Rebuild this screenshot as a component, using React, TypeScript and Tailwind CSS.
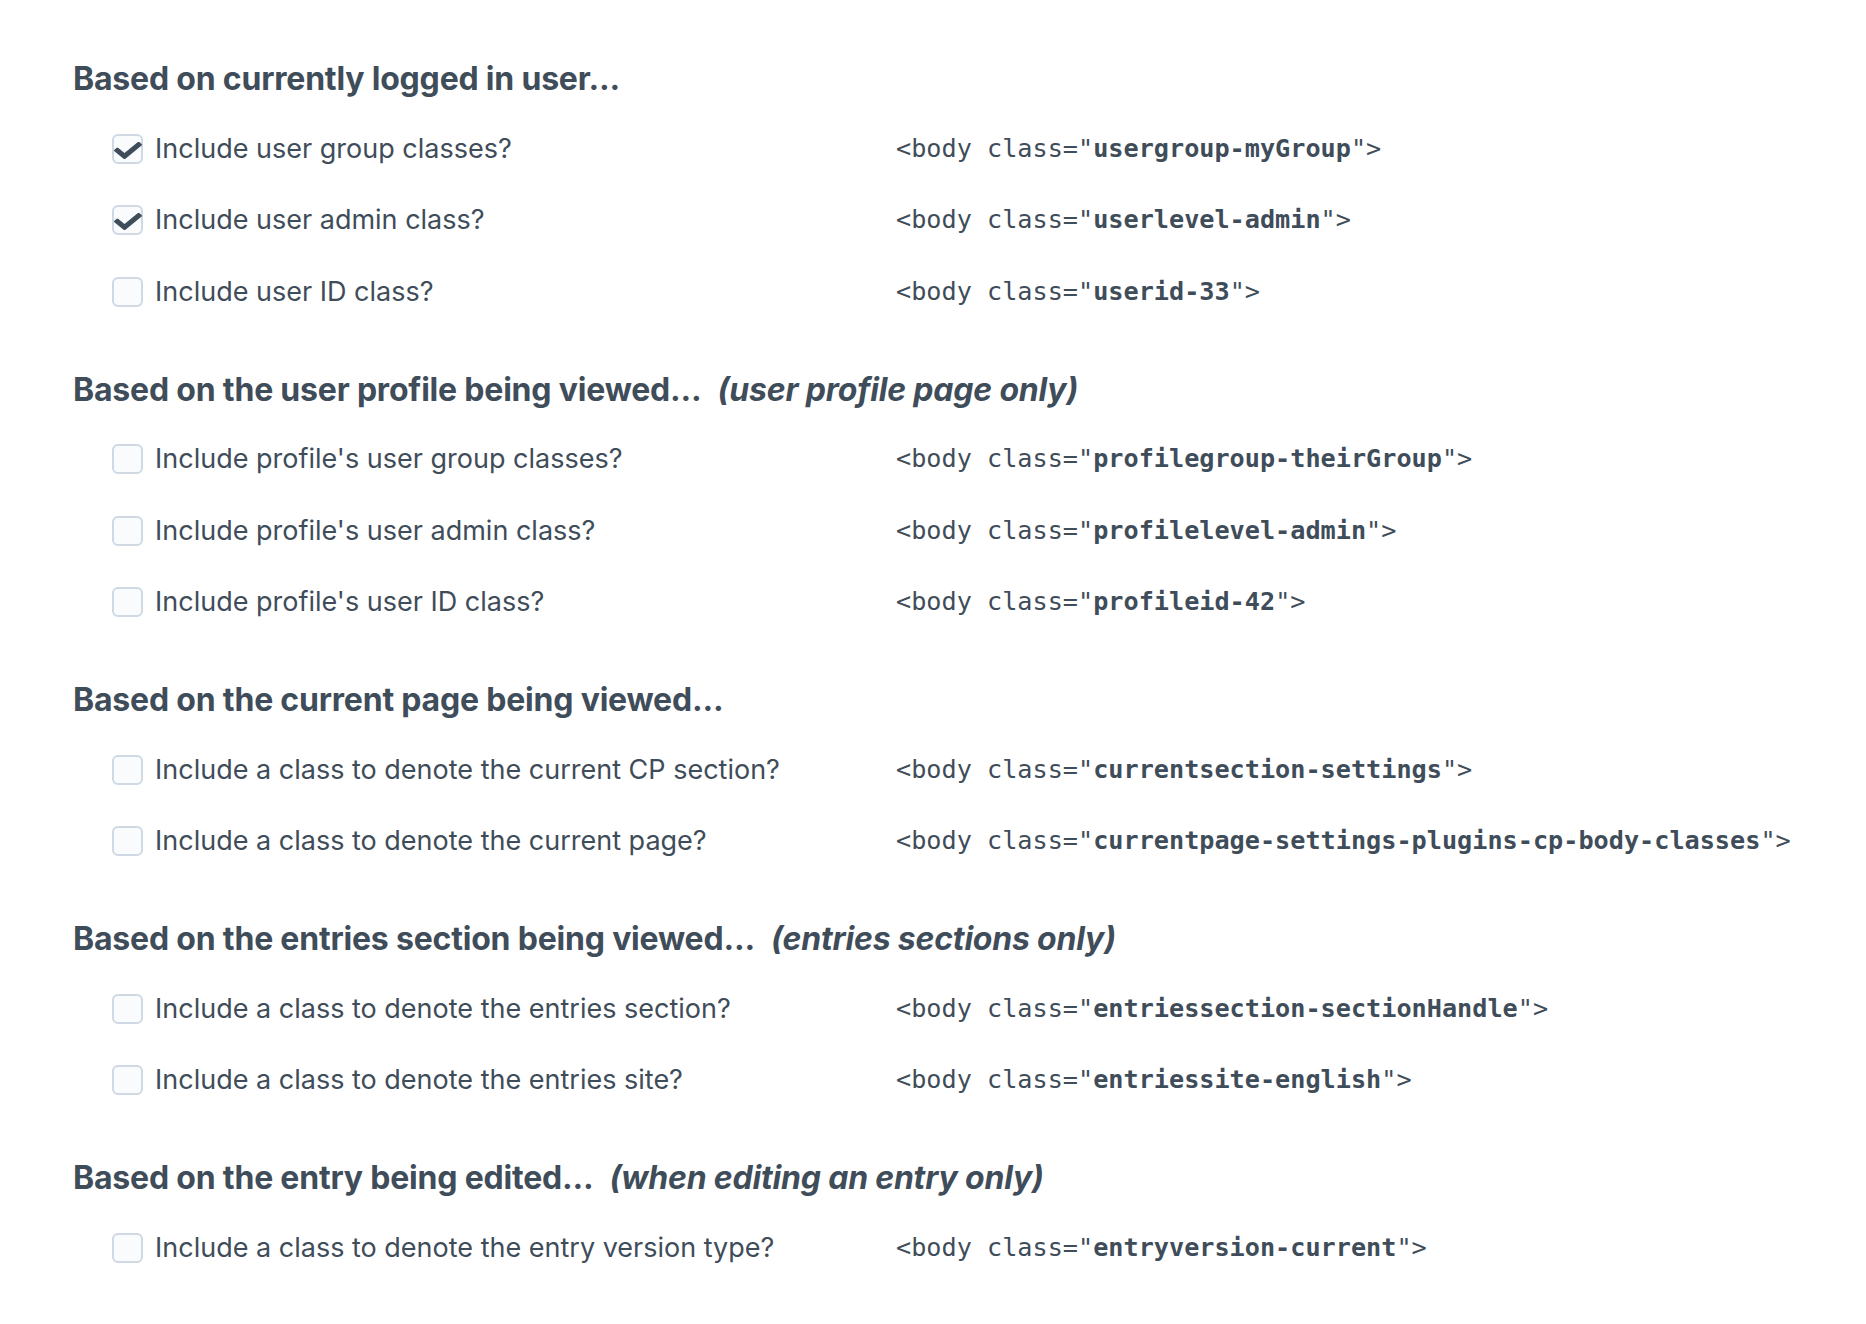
import React from "react";

type Row = { label: string; value: string; checked?: boolean };
type Section = { title: string; note?: string; rows: Row[] };

const sections: Section[] = [
    {
        title: "Based on currently logged in user...",
        rows: [
            { label: "Include user group classes?", value: "usergroup-myGroup", checked: true },
            { label: "Include user admin class?", value: "userlevel-admin", checked: true },
            { label: "Include user ID class?", value: "userid-33" },
        ],
    },
    {
        title: "Based on the user profile being viewed...",
        note: "(user profile page only)",
        rows: [
            { label: "Include profile's user group classes?", value: "profilegroup-theirGroup" },
            { label: "Include profile's user admin class?", value: "profilelevel-admin" },
            { label: "Include profile's user ID class?", value: "profileid-42" },
        ],
    },
    {
        title: "Based on the current page being viewed...",
        rows: [
            { label: "Include a class to denote the current CP section?", value: "currentsection-settings" },
            { label: "Include a class to denote the current page?", value: "currentpage-settings-plugins-cp-body-classes" },
        ],
    },
    {
        title: "Based on the entries section being viewed...",
        note: "(entries sections only)",
        rows: [
            { label: "Include a class to denote the entries section?", value: "entriessection-sectionHandle" },
            { label: "Include a class to denote the entries site?", value: "entriessite-english" },
        ],
    },
    {
        title: "Based on the entry being edited...",
        note: "(when editing an entry only)",
        rows: [
            { label: "Include a class to denote the entry version type?", value: "entryversion-current" },
        ],
    },
];

function Checkbox({ checked }: { checked?: boolean }) {
    return (
        <div className="relative w-[31px] h-[30px] shrink-0 rounded-[6px] border-2 border-[#cfd9e4] bg-[#f9fbfd]">
            {checked && (
                <svg viewBox="0 0 512 512" className="absolute left-[0px] top-[3px] w-[28px] h-[23px]" preserveAspectRatio="none">
                    <path fill="#3f4d5a" d="M173.898 439.404l-166.4-166.4c-9.997-9.997-9.997-26.206 0-36.204l36.203-36.204c9.997-9.998 26.207-9.998 36.204 0L192 312.69 432.095 72.596c9.997-9.997 26.207-9.997 36.204 0l36.203 36.204c9.997 9.997 9.997 26.206 0 36.204l-294.4 294.401c-9.998 9.997-26.207 9.997-36.204-.001z" />
                </svg>
            )}
        </div>
    );
}

export default function App() {
    return (
        <div className="min-h-screen bg-white text-[#3f4d5a] font-['Inter','Noto_Sans',sans-serif] pl-[73px] pt-[59px]">
            {sections.map((s) => (
                <section key={s.title} className="mb-[42px]">
                    <h2 className="h-[40px] leading-[40px] text-[32px] font-bold tracking-[-0.2px] mb-[14px] whitespace-nowrap">
                        {s.title}
                        {s.note && <em className="ml-[16px] font-bold">{s.note}</em>}
                    </h2>
                    {s.rows.map((r) => (
                        <div key={r.value} className="flex items-center h-[71.5px]">
                            <div className="flex items-center gap-[12px] w-[823px] pl-[39px]">
                                <Checkbox checked={r.checked} />
                                <span className="text-[27px] leading-[32px]">{r.label}</span>
                            </div>
                            <code className="font-['DejaVu_Sans_Mono',monospace] text-[25.2px] leading-[32px] whitespace-nowrap">
                                &lt;body class="<b className="font-bold">{r.value}</b>"&gt;
                            </code>
                        </div>
                    ))}
                </section>
            ))}
        </div>
    );
}
